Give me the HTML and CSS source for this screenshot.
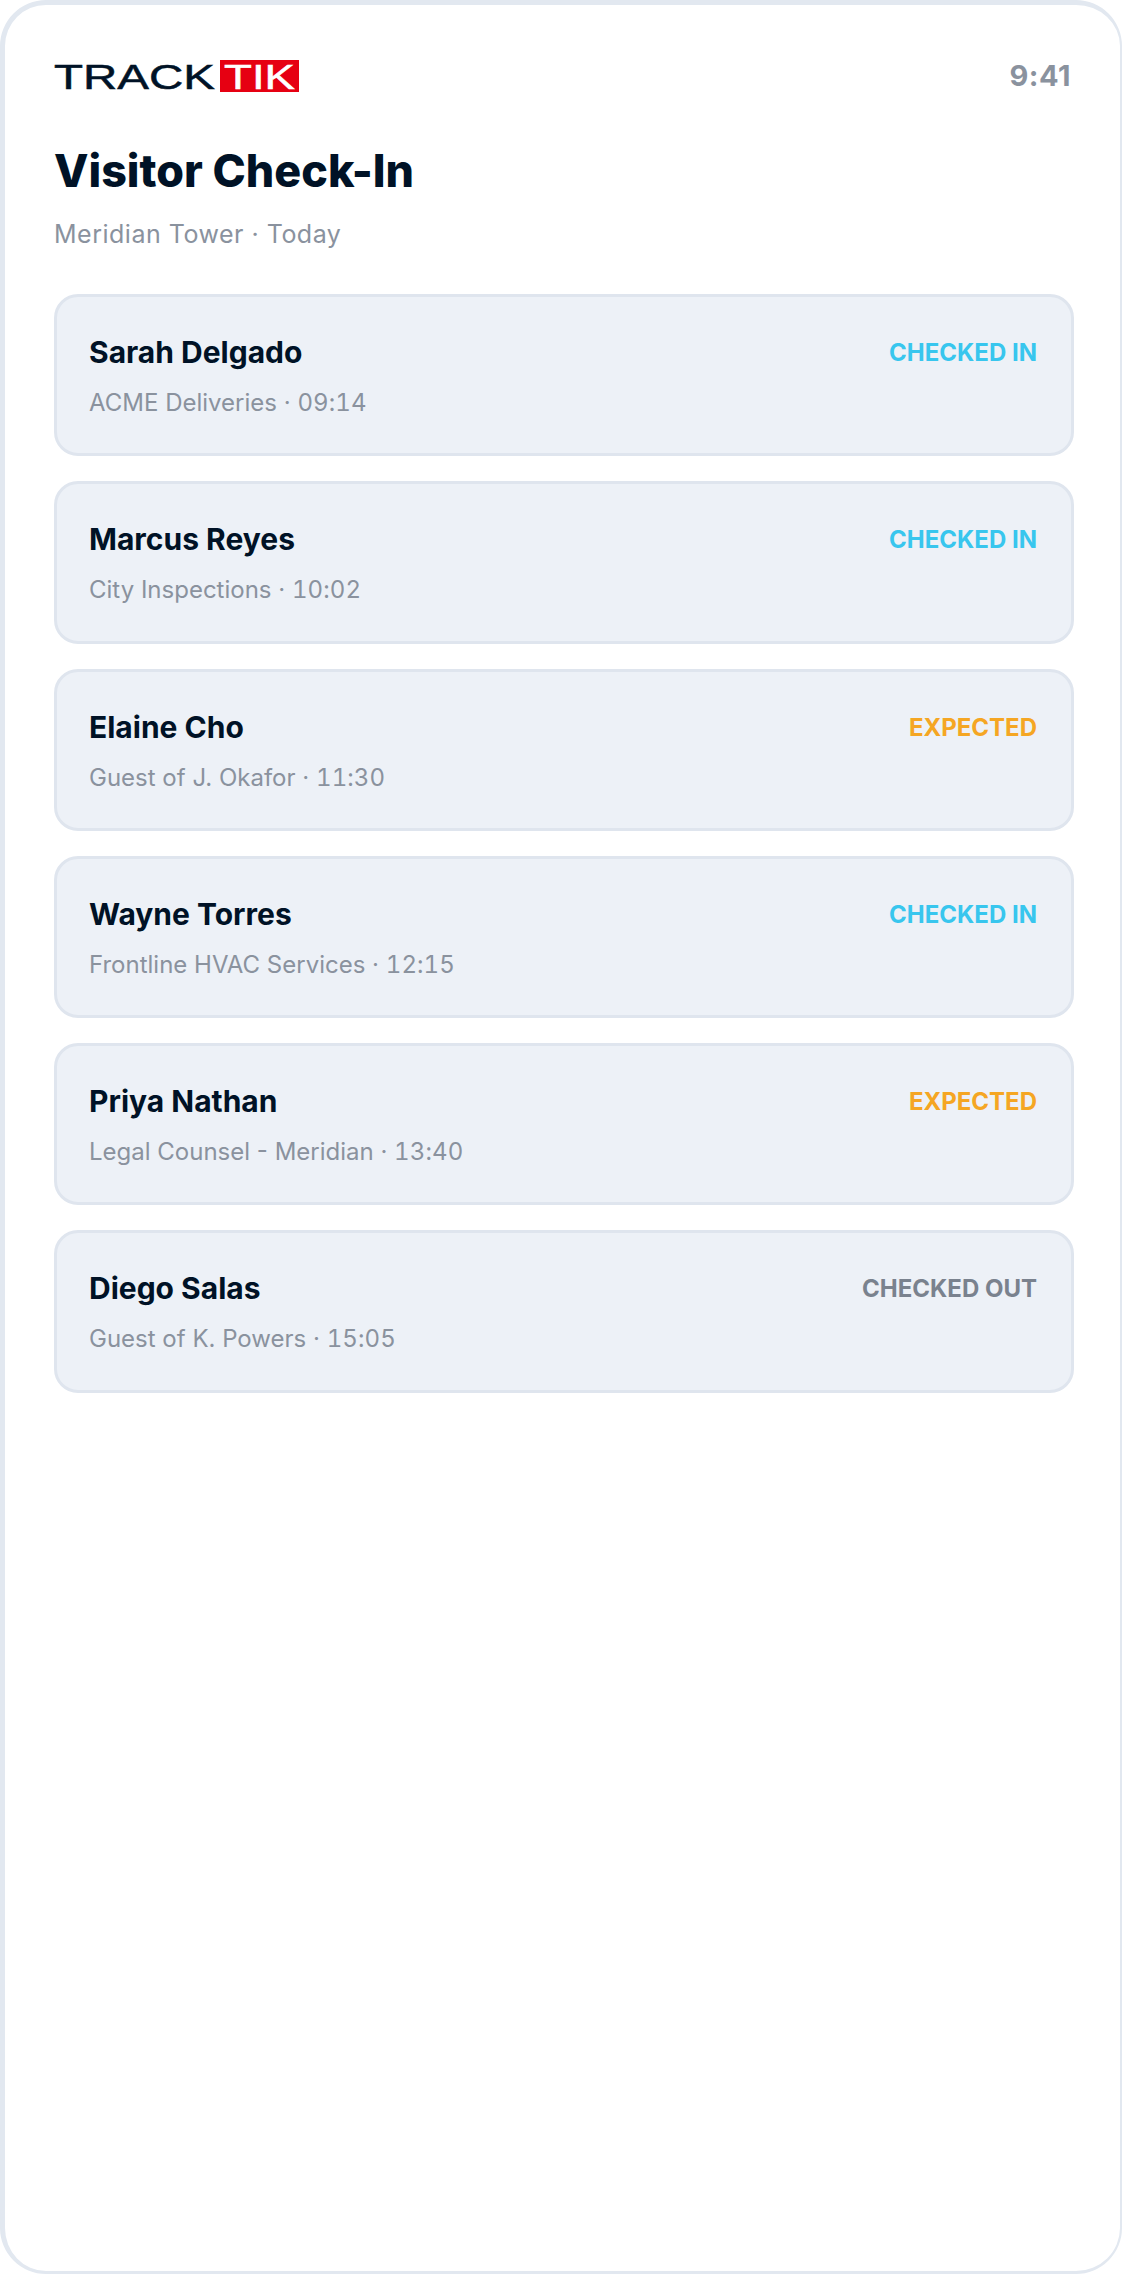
FILE: index.html
```html
<!DOCTYPE html>
<html lang="en">
<head>
    <meta charset="UTF-8">
    <title>Visitor Check-In</title>
    <link rel="stylesheet" href="styles.css">
</head>
<body>
    <div class="frame">
        <header class="top-bar">
            <svg class="logo" width="246" height="34" viewBox="0 0 246 34">
                <text class="logo-track" x="0" y="28.8" textLength="161" lengthAdjust="spacingAndGlyphs">TRACK</text>
                <rect x="166" y="0" width="79" height="32" fill="#e60012"/>
                <text class="logo-tik" x="170" y="28.8" textLength="71" lengthAdjust="spacingAndGlyphs">TIK</text>
            </svg>
            <span class="clock">9:41</span>
        </header>

        <h1>Visitor Check-In</h1>
        <p class="subtitle">Meridian Tower · Today</p>

        <div class="visitor-list">
            <div class="visitor-card">
                <div class="visitor-info">
                    <h3>Sarah Delgado</h3>
                    <p>ACME Deliveries · <span class="time">09:14</span></p>
                </div>
                <span class="status checked-in">CHECKED IN</span>
            </div>
            <div class="visitor-card">
                <div class="visitor-info">
                    <h3>Marcus Reyes</h3>
                    <p>City Inspections · <span class="time">10:02</span></p>
                </div>
                <span class="status checked-in">CHECKED IN</span>
            </div>
            <div class="visitor-card">
                <div class="visitor-info">
                    <h3>Elaine Cho</h3>
                    <p>Guest of J. Okafor · <span class="time">11:30</span></p>
                </div>
                <span class="status expected">EXPECTED</span>
            </div>
            <div class="visitor-card">
                <div class="visitor-info">
                    <h3>Wayne Torres</h3>
                    <p>Frontline HVAC Services · <span class="time">12:15</span></p>
                </div>
                <span class="status checked-in">CHECKED IN</span>
            </div>
            <div class="visitor-card">
                <div class="visitor-info">
                    <h3>Priya Nathan</h3>
                    <p>Legal Counsel - Meridian · <span class="time">13:40</span></p>
                </div>
                <span class="status expected">EXPECTED</span>
            </div>
            <div class="visitor-card">
                <div class="visitor-info">
                    <h3>Diego Salas</h3>
                    <p>Guest of K. Powers · <span class="time">15:05</span></p>
                </div>
                <span class="status checked-out">CHECKED OUT</span>
            </div>
        </div>
    </div>
</body>
</html>
```

FILE: styles.css
```css
* {
    margin: 0;
    padding: 0;
    box-sizing: border-box;
}

body {
    width: 1122px;
    height: 2274px;
    background-color: #ffffff;
    font-family: Inter, 'Liberation Sans', sans-serif;
    color: #001226;
    overflow: hidden;
}

.frame {
    height: 2274px;
    background-color: #ffffff;
    border: 3px solid #e2e8f0;
    border-width: 5px 2px 3px 5px;
    border-radius: 46px;
    padding: 55px 49px 0 49px;
}

.top-bar {
    display: flex;
    justify-content: space-between;
    align-items: flex-start;
    height: 32px;
}

.logo {
    overflow: visible;
}

.logo text {
    font-family: 'Liberation Sans', sans-serif;
    font-size: 35px;
    stroke-width: 0.5px;
}

.logo-track {
    fill: #001226;
    stroke: #001226;
}

.logo-tik {
    fill: #ffffff;
    stroke: #ffffff;
}

.clock {
    font-size: 29px;
    font-weight: 700;
    line-height: 32px;
    color: #8a929e;
    letter-spacing: 0.5px;
}

h1 {
    margin-top: 51px;
    font-size: 44.8px;
    font-weight: 800;
    line-height: 56px;
    color: #001226;
}

.subtitle {
    margin-top: 19px;
    font-size: 25px;
    line-height: 32px;
    letter-spacing: 0.5px;
    color: #8a929e;
}

.visitor-list {
    display: flex;
    flex-direction: column;
    gap: 25px;
    margin-top: 44px;
    width: 1020px;
}

.visitor-card {
    display: flex;
    justify-content: space-between;
    align-items: flex-start;
    height: 162.3px;
    padding: 37px 34px 0 32px;
    background-color: #edf1f7;
    border: 3px solid #dfe5ee;
    border-radius: 24px;
}

.visitor-info h3 {
    font-size: 30px;
    font-weight: 700;
    line-height: 36px;
    color: #001226;
}

.visitor-info p {
    margin-top: 18px;
    font-size: 24px;
    line-height: 30px;
    color: #8a929e;
}

.time {
    font-variant-numeric: tabular-nums;
    letter-spacing: 0.1px;
}

.status {
    margin-top: 1px;
    font-size: 24px;
    font-weight: 700;
    line-height: 36px;
}

.checked-in {
    color: #38c6ee;
}

.expected {
    color: #f5a623;
}

.checked-out {
    color: #7a828e;
}
```
